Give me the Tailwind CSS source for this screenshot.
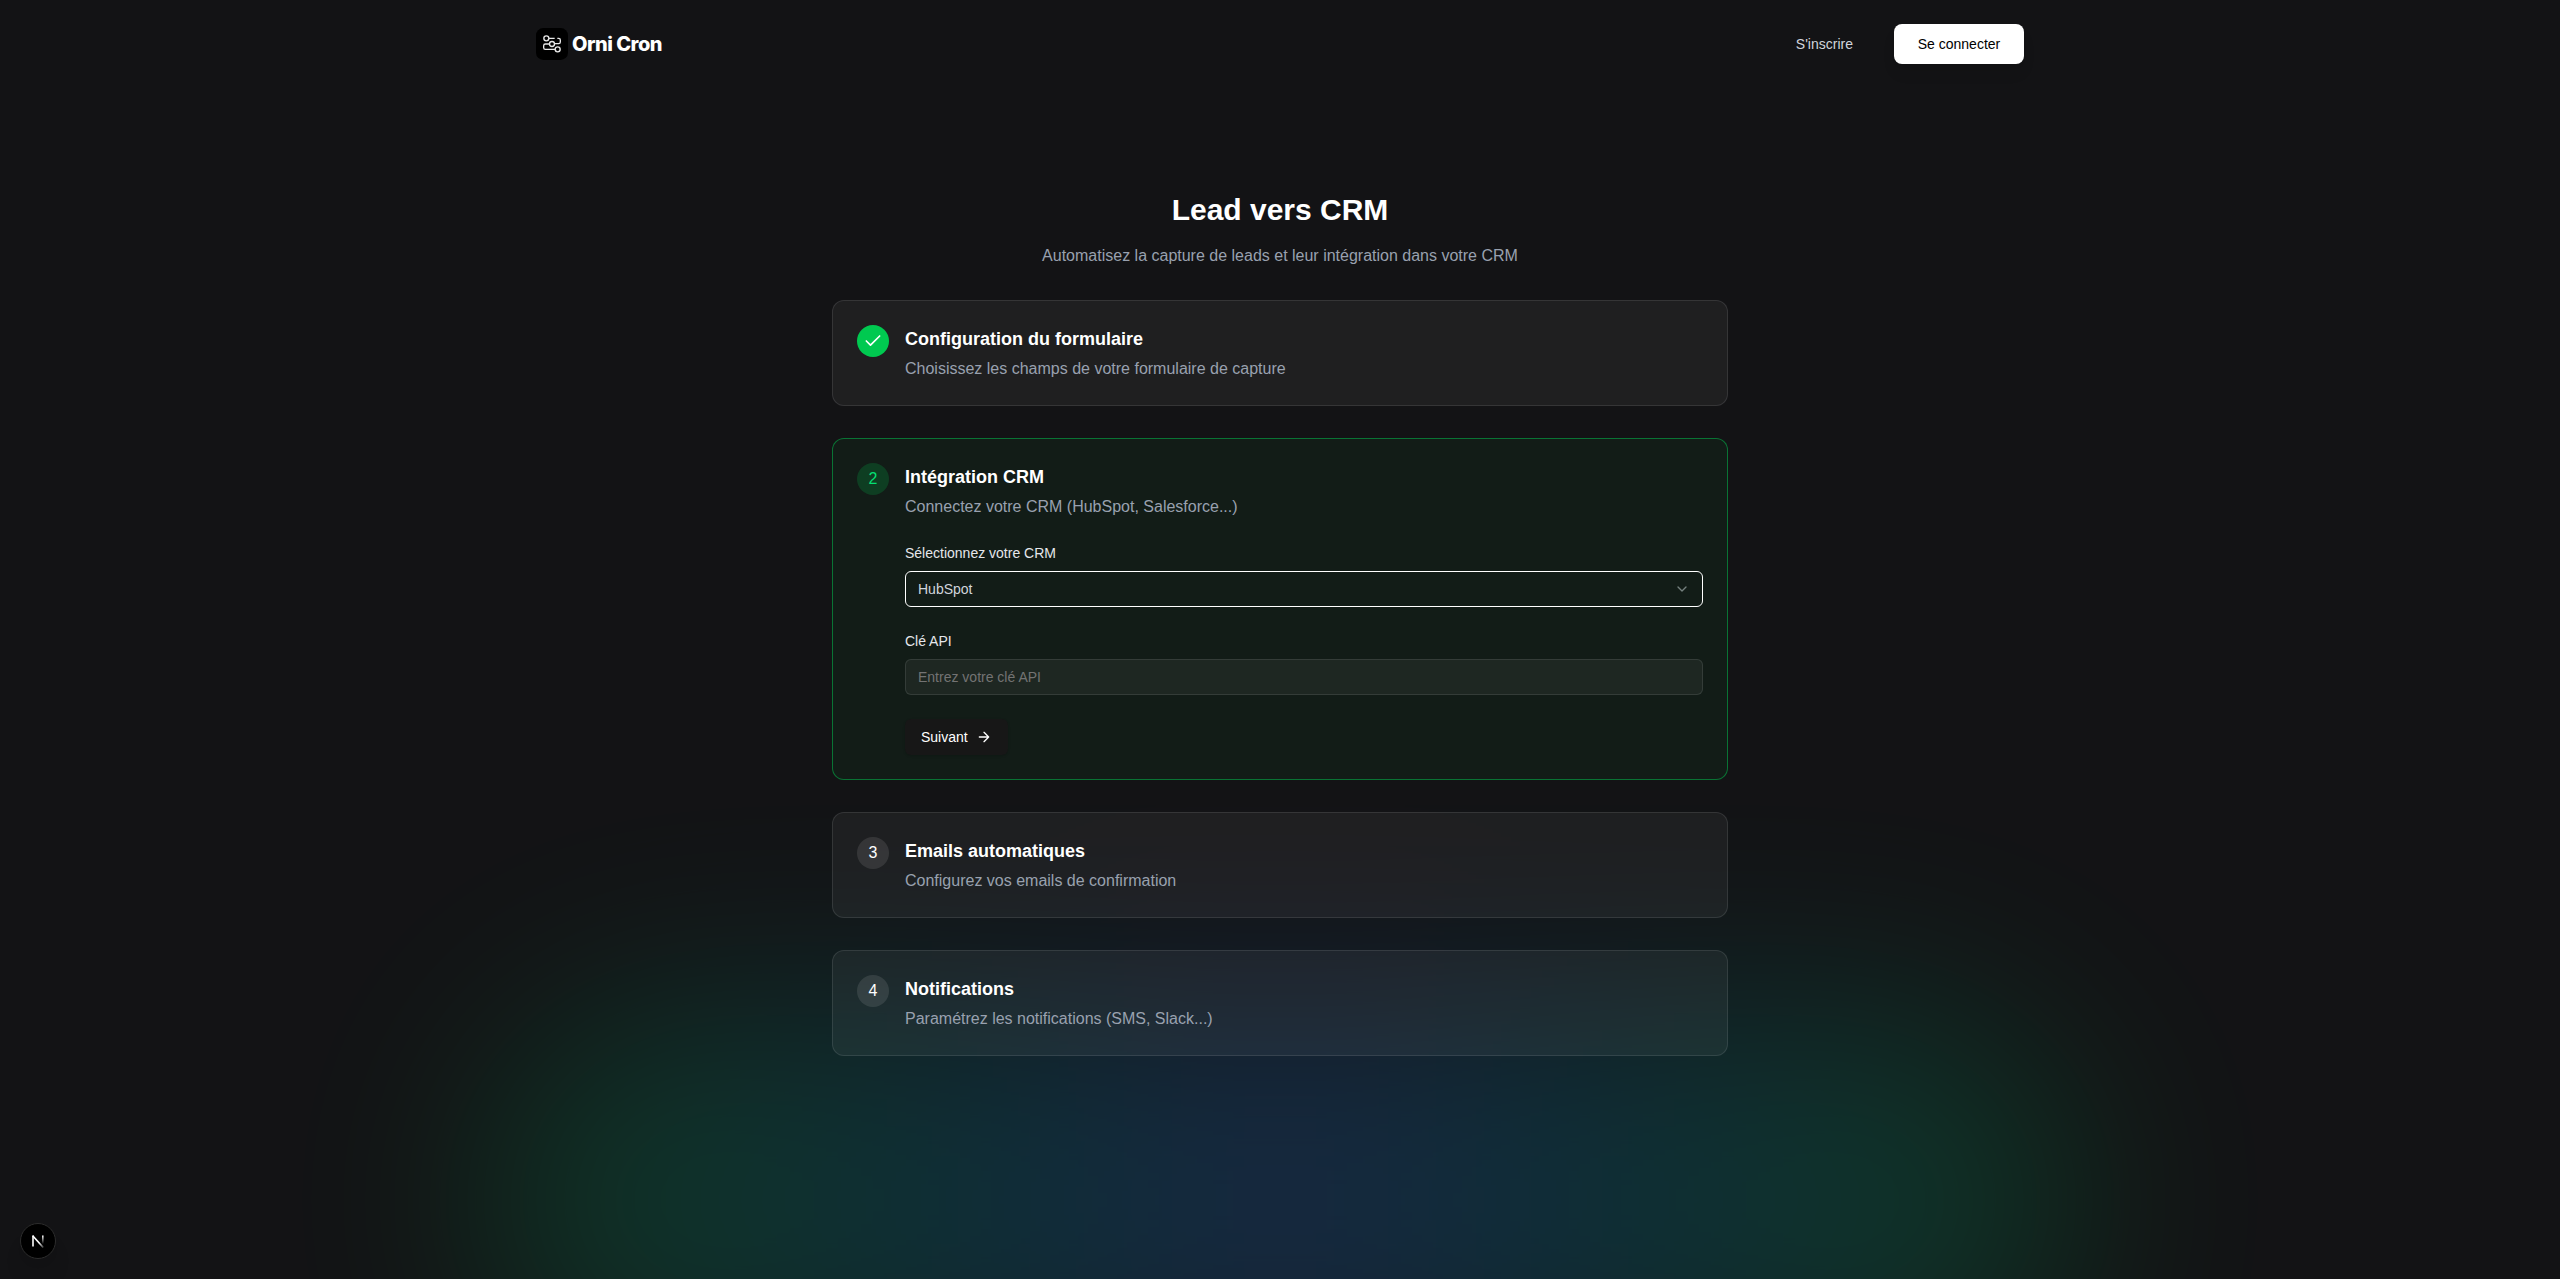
<!DOCTYPE html>
<html lang="fr">
<head>
<meta charset="utf-8">
<title>Orni Cron</title>
<script src="https://cdn.jsdelivr.net/npm/@tailwindcss/browser@4"></script>
</head>
<body class="relative isolate h-[1279px] bg-[#131315] font-['Liberation_Sans',Arial,sans-serif] text-white">
<!-- Background glow -->
<div class="absolute inset-0 -z-10 overflow-hidden">
  <div class="absolute left-1/2 top-[1000px] h-[400px] w-[1600px] -translate-x-1/2 rounded-full bg-linear-to-r from-[#00c950] via-[#2b7fff] to-[#00c950] opacity-[.19] blur-[104px]"></div>
</div>

<header class="mx-auto flex h-[88px] w-[1488px] items-center justify-between">
  <a class="flex items-center gap-1">
    <svg class="size-8" viewBox="0 0 96 96" fill="none" stroke="#e8e8e8" stroke-width="4">
      <rect width="96" height="96" rx="22" fill="#000" stroke="none"/>
      <circle cx="31" cy="31" r="7.5"/><circle cx="48" cy="48" r="7.5"/><circle cx="65" cy="64" r="7.5"/>
      <path d="M39 31h17M64 31h4q5 0 5 5v6q0 5-5 5H56M40 48H28q-5 0-5 5v6q0 5 5 5h29"/>
    </svg>
    <span class="font-[Inter,sans-serif] text-xl leading-7 font-extrabold tracking-[-0.025em]">Orni Cron</span>
  </a>
  <nav class="flex items-center text-sm">
    <a class="mr-[41px] text-gray-300">S'inscrire</a>
    <a class="flex h-10 w-[130px] items-center justify-center rounded-lg bg-white text-black shadow-lg">Se connecter</a>
  </nav>
</header>

<main class="mx-auto w-[896px] pt-[104px]">
  <h1 class="text-center text-3xl font-bold">Lead vers CRM</h1>
  <p class="mt-4 text-center text-[#99a1af]">Automatisez la capture de leads et leur intégration dans votre CRM</p>

  <div class="mt-8 flex flex-col gap-8">
    <section class="flex gap-4 rounded-xl border border-white/10 bg-white/5 p-6">
      <div class="flex size-8 shrink-0 items-center justify-center rounded-full bg-[#00c950]">
        <svg class="size-5" viewBox="0 0 24 24" fill="none" stroke="#fff" stroke-width="2" stroke-linecap="round" stroke-linejoin="round"><path d="M20 6 9 17l-5-5"/></svg>
      </div>
      <div>
        <h2 class="text-lg font-bold">Configuration du formulaire</h2>
        <p class="mt-1 text-[#99a1af]">Choisissez les champs de votre formulaire de capture</p>
      </div>
    </section>

    <section class="flex gap-4 rounded-xl border border-[#00c950]/50 bg-[#00c950]/5 p-6">
      <div class="flex size-8 shrink-0 items-center justify-center rounded-full bg-[#00c950]/20 text-[#05df72]">2</div>
      <div class="flex-1">
        <h2 class="text-lg font-bold">Intégration CRM</h2>
        <p class="mt-1 text-[#99a1af]">Connectez votre CRM (HubSpot, Salesforce...)</p>
        <form class="mt-6 text-sm">
          <label class="block text-gray-200">Sélectionnez votre CRM</label>
          <div class="mt-2 flex h-9 items-center justify-between rounded-md border border-white px-3 text-gray-300">
            <span>HubSpot</span>
            <svg class="size-4 text-[#75817e]" viewBox="0 0 24 24" fill="none" stroke="currentColor" stroke-width="2" stroke-linecap="round" stroke-linejoin="round"><path d="m6 9 6 6 6-6"/></svg>
          </div>
          <label class="mt-6 block text-gray-200">Clé API</label>
          <div class="mt-2 flex h-9 items-center rounded-md border border-white/10 bg-white/5 px-3 text-[#737373]">Entrez votre clé API</div>
          <button type="button" class="mt-6 flex h-9 w-[103px] items-center gap-2 rounded-md bg-[#171717] pl-4 shadow">Suivant
            <svg class="size-4" viewBox="0 0 24 24" fill="none" stroke="currentColor" stroke-width="2" stroke-linecap="round" stroke-linejoin="round"><path d="M5 12h14m-7-7 7 7-7 7"/></svg>
          </button>
        </form>
      </div>
    </section>

    <section class="flex gap-4 rounded-xl border border-white/10 bg-white/5 p-6">
      <div class="flex size-8 shrink-0 items-center justify-center rounded-full bg-white/10">3</div>
      <div>
        <h2 class="text-lg font-bold">Emails automatiques</h2>
        <p class="mt-1 text-[#99a1af]">Configurez vos emails de confirmation</p>
      </div>
    </section>

    <section class="flex gap-4 rounded-xl border border-white/10 bg-white/5 p-6">
      <div class="flex size-8 shrink-0 items-center justify-center rounded-full bg-white/10">4</div>
      <div>
        <h2 class="text-lg font-bold">Notifications</h2>
        <p class="mt-1 text-[#99a1af]">Paramétrez les notifications (SMS, Slack...)</p>
      </div>
    </section>
  </div>
</main>

<!-- Dev tools badge -->
<div class="absolute left-5 top-[1223px] flex size-9 items-center justify-center rounded-full border border-[#2c2c2c] bg-black shadow-xl">
  <svg class="size-3.5" viewBox="0 0 14 14" fill="none" stroke-width="1.6">
    <defs><linearGradient id="fade" x1="0" y1="0" x2="0" y2="1"><stop offset="0" stop-color="#fff"/><stop offset="1" stop-color="#fff" stop-opacity="0"/></linearGradient>
    <linearGradient id="diag" x1="0" y1="0" x2="1" y2="1"><stop offset=".6" stop-color="#fff"/><stop offset="1" stop-color="#fff" stop-opacity=".2"/></linearGradient></defs>
    <path d="M2 12.500V1.500" stroke="#fff"/><path d="M1.700 1.800 12.300 13.600" stroke="url(#diag)"/><rect x="11" y="1.500" width="1.600" height="8.500" fill="url(#fade)"/>
  </svg>
</div>
</body>
</html>
